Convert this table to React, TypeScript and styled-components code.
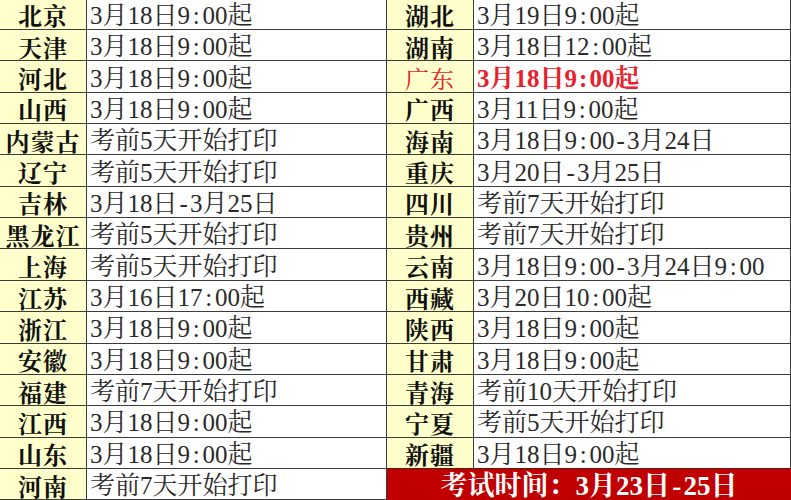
import React from 'react';
import styled, { createGlobalStyle } from 'styled-components';

const GlobalStyle = createGlobalStyle`
  html, body {
    margin: 0;
    padding: 0;
    background: #ffffff;
    overflow: hidden;
  }
`;

const Sheet = styled.div`
  display: grid;
  grid-template-columns: 87px 300px 87px 1fr;
  grid-auto-rows: 31.36px;
  width: 791px;
  margin-top: -1.4px;
`;

const NameCell = styled.div<{ $red?: boolean }>`
  display: flex;
  align-items: center;
  justify-content: center;
  padding-top: 3px;
  box-sizing: border-box;
  background: #ffffcc;
  border-right: 1px solid #3c3c3c;
  border-bottom: 1px solid #3c3c3c;
  font-family: "Noto Serif CJK SC", "Noto Sans CJK SC", serif;
  font-weight: ${({ $red }) => ($red ? 400 : 700)};
  font-size: 24px;
  line-height: 1;
  letter-spacing: 1px;
  color: ${({ $red }) => ($red ? '#e8202a' : '#111111')};
  white-space: nowrap;
`;

const DateCell = styled.div<{ $red?: boolean }>`
  display: flex;
  align-items: center;
  padding: 3px 0 0 3px;
  box-sizing: border-box;
  background: #ffffff;
  border-right: 1px solid #3c3c3c;
  border-bottom: 1px solid #3c3c3c;
  font-family: "Liberation Serif", "Noto Serif CJK SC", "Noto Sans CJK SC", serif;
  font-size: 25px;
  line-height: 1;
  color: ${({ $red }) => ($red ? '#e8202a' : '#2a2a2a')};
  font-weight: ${({ $red }) => ($red ? 700 : 400)};
  white-space: nowrap;
`;

const ExamCell = styled.div`
  grid-column: span 2;
  display: flex;
  align-items: center;
  justify-content: center;
  padding-top: 3px;
  box-sizing: border-box;
  background: #c00000;
  border-top: 1px solid #5a1a10;
  margin-top: -1px;
  font-family: "Liberation Serif", "Noto Serif CJK SC", "Noto Sans CJK SC", serif;
  font-weight: 700;
  font-size: 27px;
  line-height: 1;
  color: #ffffff;
  white-space: nowrap;
`;

const Half = styled.span`
  display: inline-block;
  width: 0.5em;
  text-align: center;
`;

// SimSun style half-width punctuation
function Typeset({ text }: { text: string }) {
  const parts = text.split(/([:\-])/);
  return (
    <>
      {parts.map((p, i) => (p === ':' || p === '-' ? <Half key={i}>{p}</Half> : <span key={i}>{p}</span>))}
    </>
  );
}

const left: [string, string][] = [
  ['北京', '3月18日9:00起'],
  ['天津', '3月18日9:00起'],
  ['河北', '3月18日9:00起'],
  ['山西', '3月18日9:00起'],
  ['内蒙古', '考前5天开始打印'],
  ['辽宁', '考前5天开始打印'],
  ['吉林', '3月18日-3月25日'],
  ['黑龙江', '考前5天开始打印'],
  ['上海', '考前5天开始打印'],
  ['江苏', '3月16日17:00起'],
  ['浙江', '3月18日9:00起'],
  ['安徽', '3月18日9:00起'],
  ['福建', '考前7天开始打印'],
  ['江西', '3月18日9:00起'],
  ['山东', '3月18日9:00起'],
  ['河南', '考前7天开始打印'],
];

const right: [string, string][] = [
  ['湖北', '3月19日9:00起'],
  ['湖南', '3月18日12:00起'],
  ['广东', '3月18日9:00起'],
  ['广西', '3月11日9:00起'],
  ['海南', '3月18日9:00-3月24日'],
  ['重庆', '3月20日-3月25日'],
  ['四川', '考前7天开始打印'],
  ['贵州', '考前7天开始打印'],
  ['云南', '3月18日9:00-3月24日9:00'],
  ['西藏', '3月20日10:00起'],
  ['陕西', '3月18日9:00起'],
  ['甘肃', '3月18日9:00起'],
  ['青海', '考前10天开始打印'],
  ['宁夏', '考前5天开始打印'],
  ['新疆', '3月18日9:00起'],
];

export default function App() {
  return (
    <>
      <GlobalStyle />
      <Sheet>
        {left.map(([name, date], i) => {
          const r = right[i];
          const red = r && r[0] === '广东';
          return (
            <React.Fragment key={name}>
              <NameCell>{name}</NameCell>
              <DateCell>
                <Typeset text={date} />
              </DateCell>
              {r ? (
                <>
                  <NameCell $red={red}>{r[0]}</NameCell>
                  <DateCell $red={red}>
                    <Typeset text={r[1]} />
                  </DateCell>
                </>
              ) : (
                <ExamCell>
                  考试时间：<Typeset text="3月23日-25日" />
                </ExamCell>
              )}
            </React.Fragment>
          );
        })}
      </Sheet>
    </>
  );
}
